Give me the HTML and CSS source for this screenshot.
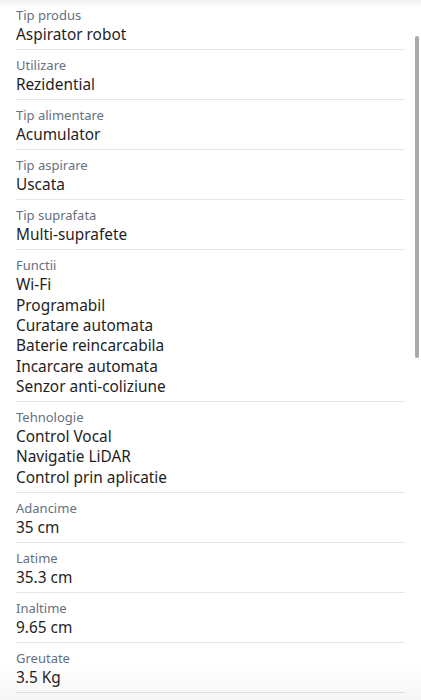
FILE: index.html
```html
<!DOCTYPE html>
<html lang="ro">
<head>
  <meta charset="UTF-8">
  <meta name="viewport" content="width=device-width, initial-scale=1.0">
  <title>Specificatii</title>
  <link rel="stylesheet" href="styles.css">
</head>
<body>
  <div class="specs">
    <div class="spec-row">
      <div class="spec-label">Tip produs</div>
      <div class="spec-value">Aspirator robot</div>
    </div>
    <div class="spec-row">
      <div class="spec-label">Utilizare</div>
      <div class="spec-value">Rezidential</div>
    </div>
    <div class="spec-row">
      <div class="spec-label">Tip alimentare</div>
      <div class="spec-value">Acumulator</div>
    </div>
    <div class="spec-row">
      <div class="spec-label">Tip aspirare</div>
      <div class="spec-value">Uscata</div>
    </div>
    <div class="spec-row">
      <div class="spec-label">Tip suprafata</div>
      <div class="spec-value">Multi-suprafete</div>
    </div>
    <div class="spec-row">
      <div class="spec-label">Functii</div>
      <div class="spec-value">Wi-Fi</div>
      <div class="spec-value">Programabil</div>
      <div class="spec-value">Curatare automata</div>
      <div class="spec-value">Baterie reincarcabila</div>
      <div class="spec-value">Incarcare automata</div>
      <div class="spec-value">Senzor anti-coliziune</div>
    </div>
    <div class="spec-row">
      <div class="spec-label">Tehnologie</div>
      <div class="spec-value">Control Vocal</div>
      <div class="spec-value">Navigatie LiDAR</div>
      <div class="spec-value">Control prin aplicatie</div>
    </div>
    <div class="spec-row">
      <div class="spec-label">Adancime</div>
      <div class="spec-value">35 cm</div>
    </div>
    <div class="spec-row">
      <div class="spec-label">Latime</div>
      <div class="spec-value">35.3 cm</div>
    </div>
    <div class="spec-row">
      <div class="spec-label">Inaltime</div>
      <div class="spec-value">9.65 cm</div>
    </div>
    <div class="spec-row">
      <div class="spec-label">Greutate</div>
      <div class="spec-value">3.5 Kg</div>
    </div>
  </div>

  <div class="scrollbar"></div>
  <div class="fade-top"></div>
  <div class="fade-bottom"></div>
</body>
</html>
```

FILE: styles.css
```css
body {
  font-family: "Noto Sans", "Open Sans", sans-serif;
  background-color: #fff;
  margin: 0;
  padding: 0;
  overflow: hidden;
}

.specs {
  padding: 0 16px;
}

.spec-row {
  padding: 6px 0 3.8px;
  border-bottom: 1px solid #e6e6e6;
}

.spec-label {
  font-size: 13px;
  line-height: 18px;
  margin-bottom: 1px;
  color: #667080;
}

.spec-value {
  font-size: 15.4px;
  line-height: 20.3px;
  color: #1e1e1e;
}

.scrollbar {
  position: fixed;
  top: 36px;
  right: 2px;
  width: 4px;
  height: 322px;
  border-radius: 2px;
  background: #a9a9a9;
}

.fade-top {
  position: fixed;
  top: 0;
  left: 0;
  right: 0;
  height: 8px;
  background: linear-gradient(rgba(0, 0, 0, 0.06), rgba(0, 0, 0, 0));
}

.fade-bottom {
  position: fixed;
  bottom: 0;
  left: 0;
  right: 0;
  height: 40px;
  background: linear-gradient(rgba(0, 0, 0, 0), rgba(0, 0, 0, 0.035));
}
```
